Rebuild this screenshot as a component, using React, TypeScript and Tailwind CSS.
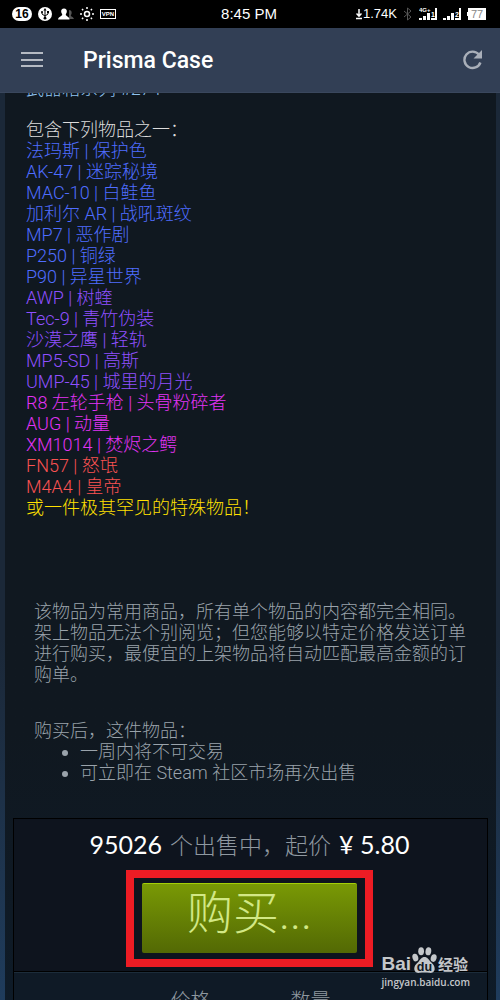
const items = [
  { name: '法玛斯 | 保护色', rarity: 'text-[#4f6dff]' },
  { name: 'AK-47 | 迷踪秘境', rarity: 'text-[#4f6dff]' },
  { name: 'MAC-10 | 白鲑鱼', rarity: 'text-[#4f6dff]' },
  { name: '加利尔 AR | 战吼斑纹', rarity: 'text-[#4f6dff]' },
  { name: 'MP7 | 恶作剧', rarity: 'text-[#4f6dff]' },
  { name: 'P250 | 铜绿', rarity: 'text-[#4f6dff]' },
  { name: 'P90 | 异星世界', rarity: 'text-[#4f6dff]' },
  { name: 'AWP | 树蝰', rarity: 'text-[#8f50ff]' },
  { name: 'Tec-9 | 青竹伪装', rarity: 'text-[#8f50ff]' },
  { name: '沙漠之鹰 | 轻轨', rarity: 'text-[#8f50ff]' },
  { name: 'MP5-SD | 高斯', rarity: 'text-[#8f50ff]' },
  { name: 'UMP-45 | 城里的月光', rarity: 'text-[#8f50ff]' },
  { name: 'R8 左轮手枪 | 头骨粉碎者', rarity: 'text-[#e233f5]' },
  { name: 'AUG | 动量', rarity: 'text-[#e233f5]' },
  { name: 'XM1014 | 焚烬之鳄', rarity: 'text-[#e233f5]' },
  { name: 'FN57 | 怒氓', rarity: 'text-[#fa5252]' },
  { name: 'M4A4 | 皇帝', rarity: 'text-[#fa5252]' },
];

function SignalIcon({ label, digit }: { label?: string; digit: string }) {
  return (
    <svg width="18" height="14" viewBox="0 0 18 14" className="text-white" fill="currentColor">
      {label && (
        <text x="0" y="5" fontSize="6" fontWeight="700" fontFamily="Liberation Sans, sans-serif">
          {label}
        </text>
      )}
      <path d="M0 11h3v2H0zM4 9h3v4H4zM8 6h3v7H8zM12 11h6v2h-6zM16 1h2v12h-2z" />
      <text x="12" y="10" fontSize="7" fontWeight="700" fontFamily="Liberation Sans, sans-serif">
        {digit}
      </text>
    </svg>
  );
}

function StatusBar() {
  return (
    <div className="grid h-7 shrink-0 grid-cols-[1fr_auto_1fr] items-center bg-black pr-3.5 pl-3 text-white">
      <div className="flex items-center gap-1.5">
        <span className="flex h-3.5 w-5 items-center justify-center rounded-full bg-white font-['Liberation_Sans',sans-serif] text-xs font-bold text-black">
          16
        </span>
        <svg width="14" height="14" viewBox="0 0 14 14">
          <circle cx="7" cy="7" r="7" fill="#fff" />
          <path d="M7 3v8M4 5v2l3 2M10 5v2L7 9" fill="none" stroke="#000" strokeWidth="1" />
          <path d="M7 1l1.6 2.6H5.4z" />
          <circle cx="7" cy="11.2" r="1.4" />
          <circle cx="4" cy="5" r="1" />
          <path d="M9 4h2v2H9z" />
        </svg>
        <svg width="16" height="14" viewBox="0 0 16 14">
          <path d="M11 3c2 0 3 1.3 2.6 3.4-.2 1-.8 1.4-.8 2.1 0 1 2.2 1.2 3.2 3.5h-5z" fill="#555" />
          <path
            d="M6 1.500c2 0 3.100 1.400 2.800 3.600-.2 1.200-1 1.800-1 2.700C7.800 9.200 11 9.200 11.600 12.500H0C.8 9.200 4.200 9.200 4.200 7.800c0-.9-.8-1.500-1-2.700C2.900 2.900 4 1.500 6 1.500z"
            fill="#fff"
          />
        </svg>
        <svg width="14" height="14" viewBox="0 0 14 14" fill="none" stroke="#fff" strokeWidth="1.500">
          <circle cx="7" cy="7" r="2.500" />
          <path
            d="M7 0v2M7 12v2M0 7h2M12 7h2M2 2l1.200 1.200M10.800 10.800L12 12M2 12l1.200-1.200M10.800 3.200L12 2"
          />
        </svg>
        <span className="flex h-2.5 w-4 items-center justify-center border border-white font-['Liberation_Sans',sans-serif] text-[6px] font-bold">
          VPN
        </span>
      </div>
      <span className="font-['Liberation_Sans',sans-serif] text-[15px] font-normal">8:45 PM</span>
      <div className="flex items-center justify-end gap-1.5">
        <div className="flex items-center gap-px">
          <svg width="6" height="12" viewBox="0 0 6 12" fill="none" stroke="#fff" strokeWidth="1.500">
            <path d="M3 1v7M0 10.500h6M0.500 5.500L3 8.200l2.500-2.700" />
          </svg>
          <span className="font-['Liberation_Sans',sans-serif] text-[13px] font-normal">1.74K</span>
        </div>
        <svg width="10" height="14" viewBox="0 0 10 14" fill="none" stroke="#555" strokeWidth="1">
          <path d="M1 4l7 6-3.500 3V1L8 4l-7 6" />
        </svg>
        <SignalIcon label="4G+" digit="1" />
        <SignalIcon digit="2" />
        <div className="flex items-center">
          <span className="h-1 w-px bg-white" />
          <span className="flex h-3 w-[18px] items-center justify-center bg-white font-['Liberation_Sans',sans-serif] text-[11px] font-normal text-[#888]">
            77
          </span>
        </div>
      </div>
    </div>
  );
}

function AppHeader() {
  return (
    <header className="flex h-[65px] shrink-0 items-center border-b border-[#3a475d] bg-[#323f55] pr-4 pl-[21px]">
      <button type="button" aria-label="Menu" className="flex">
        <svg width="22" height="16" viewBox="0 0 22 16" fill="#b5bac3">
          <path d="M0 0h22v2H0zM0 7h22v2H0zM0 13h22v2H0z" />
        </svg>
      </button>
      <h1 className="ml-10 flex-1 pt-0.5 font-['Roboto',sans-serif] text-[23px] font-medium text-white">
        Prisma Case
      </h1>
      <button type="button" aria-label="Refresh" className="flex">
        <svg width="22" height="20" viewBox="0 0 22 20">
          <path
            d="M17 4.600A8.200 8.200 0 1 0 18.400 12.500"
            fill="none"
            stroke="#a9afb9"
            strokeWidth="2.400"
          />
          <path d="M20 0v8.500h-8.500z" fill="#a9afb9" />
        </svg>
      </button>
    </header>
  );
}

function Watermark() {
  return (
    <div className="absolute right-[30px] bottom-2.5 text-[#c4c7ca]">
      <div className="flex h-7 items-end">
        <span className="font-['Liberation_Sans',sans-serif] text-[19px] leading-5 font-bold">Bai</span>
        <svg width="27" height="28" viewBox="0 0 28 28" fill="currentColor">
          <ellipse cx="4.500" cy="11.500" rx="3" ry="4" transform="rotate(-15 4.500 11.500)" />
          <ellipse cx="10.500" cy="5" rx="3" ry="4.200" />
          <ellipse cx="18" cy="5" rx="3" ry="4.200" transform="rotate(8 18 5)" />
          <ellipse cx="23.500" cy="12" rx="3" ry="4" transform="rotate(15 23.500 12)" />
          <path d="M14 11c3 0 4 2.500 6 4.500 2.500 2.400 5 4.500 4.500 8.500-.8 2.800-3 3.600-5.500 3.300-3-.4-7-.4-10 0-2.500.3-5-.5-5.500-3.300C3 20 5.500 18 8 15.500 10 13.500 11 11 14 11z" />
          <text
            x="14"
            y="25"
            textAnchor="middle"
            fontSize="13"
            fontWeight="700"
            fontFamily="Liberation Sans, sans-serif"
            fill="#101822"
          >
            du
          </text>
        </svg>
        <span className="font-['Noto_Sans_CJK_SC',sans-serif] text-[15px] leading-5 font-bold">经验</span>
      </div>
      <div className="font-['Open_Sans',sans-serif] text-[10px] leading-4 font-semibold">jingyan.baidu.com</div>
    </div>
  );
}

export default function App() {
  return (
    <div className="relative flex h-screen flex-col overflow-hidden bg-[#101822] font-['Roboto','Noto_Sans_CJK_SC',sans-serif] font-light">
      <StatusBar />
      <AppHeader />

      <main className="min-h-0 flex-1 overflow-hidden bg-linear-to-b from-[#1b2838] from-60% to-[#1f3c5c] pr-1 pl-[5px]">
        <div className="min-h-full bg-linear-to-b from-[#101820] from-70% to-[#0e1b28] px-2">
          {/* Item description, scrolled under the header */}
          <section className="-mt-[15px] px-[13px] text-lg leading-[21px]">
            <p className="text-[#8fc3f0]">武器箱系列 #274</p>
            <p className="mt-5 text-[#dcdcdc]">包含下列物品之一：</p>
            <ul>
              {items.map((item) => (
                <li key={item.name} className={item.rarity}>
                  {item.name}
                </li>
              ))}
            </ul>
            <p className="text-[#ffe000]">或一件极其罕见的特殊物品！</p>
          </section>

          {/* Commodity notes */}
          <section className="mt-[83px] pr-4 pl-[21px] text-lg leading-[21px] text-[#9aa3ab]">
            <p>
              该物品为常用商品，所有单个物品的内容都完全相同。架上物品无法个别阅览；但您能够以特定价格发送订单进行购买，最便宜的上架物品将自动匹配最高金额的订购单。
            </p>
            <p className="mt-[35px]">购买后，这件物品：</p>
            <ul className="list-disc pl-[46px]">
              <li>一周内将不可交易</li>
              <li>可立即在 Steam 社区市场再次出售</li>
            </ul>
          </section>

          {/* Order box */}
          <section className="mt-[35px] border border-black bg-[#0e141e]">
            <div className="flex flex-col items-center border-b border-black pt-2 pr-[18px] pb-1 pl-4">
              <p className="flex items-baseline gap-2 text-[23px] leading-[34px] text-[#8f98a0]">
                <span className="font-['Lato',sans-serif] text-[25px] font-normal text-white">95026</span>
                <span>个出售中，起价</span>
                <span className="font-['Lato',sans-serif] text-[25px] font-normal text-white">¥ 5.80</span>
              </p>
              <div className="mt-1.5 border-8 border-[#ed1c24] px-2 pt-[5px] pb-1.5">
                <button
                  type="button"
                  className="block h-[70px] w-[215px] rounded-xs border-t border-[#a4d007] bg-linear-to-b from-[#799905] to-[#536904] pb-3 text-[46px] leading-none text-[#d2e885]"
                >
                  购买...
                </button>
              </div>
            </div>
            <table className="w-full border-t border-[#1c2c3a] bg-[#0f1a26] text-xl leading-6 text-[#8f98a0]">
              <thead>
                <tr>
                  <th className="w-1/2 pt-4 pr-10 text-right font-light">价格</th>
                  <th className="w-1/2 pt-4 pl-10 text-left font-light">数量</th>
                </tr>
              </thead>
            </table>
          </section>
        </div>
      </main>

      <Watermark />
    </div>
  );
}
